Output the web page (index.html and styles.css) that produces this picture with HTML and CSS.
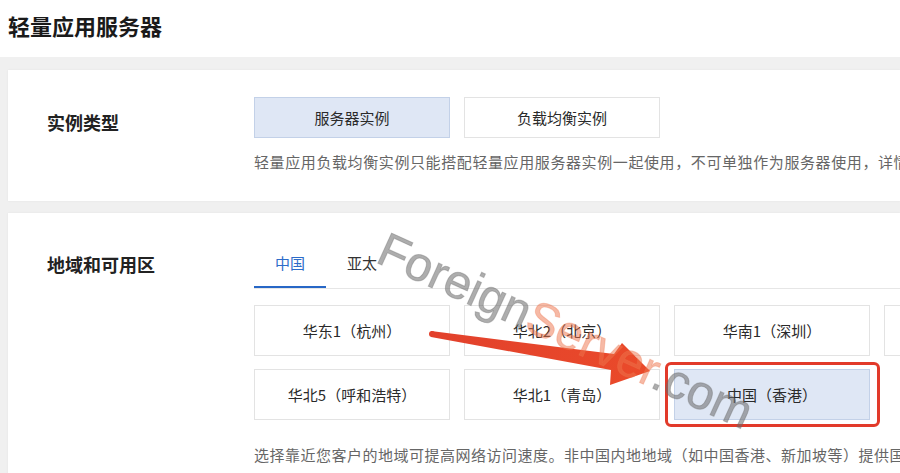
FILE: index.html
```html
<!DOCTYPE html>
<html lang="zh-CN">
  <head>
    <meta charset="UTF-8" />
    <meta name="viewport" content="width=device-width, initial-scale=1.0" />
    <title>轻量应用服务器</title>
    <link rel="stylesheet" href="styles.css">
  </head>
  <body>
    <div class="page-header">
      <h1>轻量应用服务器</h1>
    </div>

    <div class="content">
      <section class="form-card">
        <div class="form-row">
          <div class="form-label">实例类型</div>
          <div class="form-field">
            <div class="option-list">
              <button class="option short selected">服务器实例</button>
              <button class="option short">负载均衡实例</button>
            </div>
            <p class="field-tip first-tip">轻量应用负载均衡实例只能搭配轻量应用服务器实例一起使用，不可单独作为服务器使用，详情请参见文档。</p>
          </div>
        </div>
      </section>

      <section class="form-card">
        <div class="form-row">
          <div class="form-label tall">地域和可用区</div>
          <div class="form-field">
            <div class="tabs">
              <div class="tab active">中国</div>
              <div class="tab">亚太</div>
            </div>
            <div class="option-list region-list">
              <button class="option">华东1（杭州）</button>
              <button class="option">华北2（北京）</button>
              <button class="option">华南1（深圳）</button>
              <button class="option">华东2（上海）</button>
              <button class="option">华北5（呼和浩特）</button>
              <button class="option">华北1（青岛）</button>
              <button class="option selected highlighted">中国（香港）</button>
            </div>
            <p class="field-tip">选择靠近您客户的地域可提高网络访问速度。非中国内地地域（如中国香港、新加坡等）提供国际带宽。</p>
          </div>
        </div>
      </section>
    </div>

    <!-- annotation layer: arrow + watermark drawn over the page -->
    <div class="overlay">
      <svg class="arrow" width="900" height="473" viewBox="0 0 900 473">
        <defs>
          <linearGradient id="arrowFill" x1="0" y1="0" x2="1" y2="0">
            <stop offset="0" stop-color="#e2412c" />
            <stop offset="1" stop-color="#ea4a2a" />
          </linearGradient>
        </defs>
        <polygon fill="url(#arrowFill)"
          points="431,331 614,354 622,343 650,371 610,385 611,370 431,337" />
        <circle cx="432" cy="334" r="3" fill="#e2412c" />
      </svg>
      <span class="watermark">Foreign<span class="wm-accent">Server</span>.com</span>
    </div>
  </body>
</html>
```

FILE: styles.css
```css
html,
body {
  overflow: hidden;
}
body {
  margin: 0;
  position: relative;
  height: 473px;
  background: #f0f0f0;
  font-family: "Noto Sans CJK SC", "Noto Sans", sans-serif;
  color: #333;
}
.page-header {
  height: 57px;
  padding-left: 8px;
  background: #fff;
}
.page-header h1 {
  margin: 0;
  font-size: 22px;
  line-height: 50px;
  font-weight: 700;
  color: #1a1a1a;
}
.content {
  padding: 13px 0 0 8px;
}
.form-card {
  background: #fff;
  padding: 27px 0 28px 39px;
  margin-bottom: 12px;
  box-shadow: 0 0 2px rgba(0, 0, 0, 0.06);
}
.form-row {
  display: flex;
}
.form-label {
  flex: 0 0 207px;
  font-size: 18px;
  font-weight: 600;
  color: #222;
  line-height: 26px;
  padding-top: 12px;
}
.form-label.tall {
  line-height: 48px;
  padding-top: 0;
}
.form-field {
  flex: 1;
  min-width: 0;
}
.option-list {
  display: grid;
  grid-template-columns: repeat(4, 196px);
  column-gap: 14px;
  row-gap: 13px;
}
.option {
  height: 51px;
  padding: 0;
  border: 1px solid #e3e3e3;
  background: #fff;
  font-family: inherit;
  font-size: 15px;
  color: #2a2a2a;
  white-space: nowrap;
}
.option.short {
  height: 41px;
}
.option.selected {
  background: #dfe7f5;
  border-color: #c3d1e8;
}
.option.highlighted {
  position: relative;
}
.option.highlighted::after {
  content: "";
  position: absolute;
  top: -8px;
  left: -10px;
  right: -11px;
  bottom: -8px;
  border: 3px solid #e23a2a;
  border-radius: 6px;
}
.field-tip {
  margin: 24px 0 0;
  font-size: 15px;
  line-height: 22px;
  letter-spacing: 0.5px;
  color: #666;
  white-space: nowrap;
}
.field-tip.first-tip {
  margin-top: 13px;
  letter-spacing: 0.6px;
}
.tabs {
  display: flex;
  border-bottom: 1px solid #e6e6e6;
}
.tab {
  width: 72px;
  height: 46px;
  line-height: 46px;
  text-align: center;
  font-size: 15px;
  color: #333;
  border-bottom: 2px solid transparent;
}
.tab.active {
  color: #2d6cc9;
  border-bottom-color: #2767c6;
}
.region-list {
  margin-top: 16px;
}
.overlay {
  position: absolute;
  top: 0;
  left: 0;
  width: 900px;
  height: 473px;
  pointer-events: none;
}
.arrow {
  position: absolute;
  top: 0;
  left: 0;
}
.watermark {
  position: absolute;
  left: 381px;
  top: 223px;
  font-family: "Liberation Sans", Arial, sans-serif;
  font-size: 48px;
  line-height: 48px;
  white-space: nowrap;
  color: rgba(105, 105, 105, 0.55);
  -webkit-text-stroke: 1px rgba(105, 105, 105, 0.35);
  transform-origin: 0 50%;
  transform: rotate(24.5deg);
}
.wm-accent {
  color: rgba(238, 115, 75, 0.5);
  -webkit-text-stroke: 1px rgba(238, 115, 75, 0.3);
}
```
